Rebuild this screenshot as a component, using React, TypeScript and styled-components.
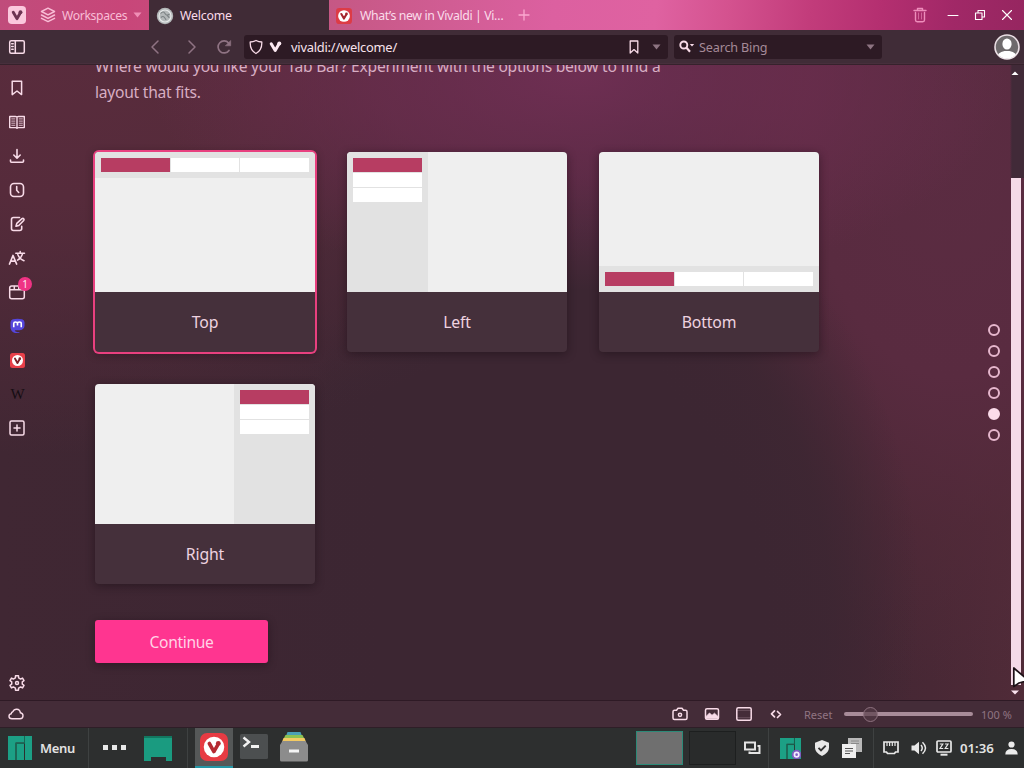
import React from "react";
import styled, { createGlobalStyle, css } from "styled-components";

const PINK = "#ff3590";
const PALE = "#f8dbe8";

const GlobalStyle = createGlobalStyle`
  *, *::before, *::after { box-sizing: border-box; }
  body { margin: 0; overflow: hidden; background: #3d2733; }
  body, button { font-family: "Noto Sans", "Open Sans", sans-serif; }
  button { border: 0; padding: 0; background: none; color: inherit; }
  svg { display: block; flex: none; }
`;

const Screen = styled.div`
  width: 1024px;
  height: 768px;
  display: flex;
  flex-direction: column;
  overflow: hidden;
  color: ${PALE};
  font-size: 13px;
`;

/* ---------- tab bar ---------- */

const TabBar = styled.header`
  height: 30px;
  flex: none;
  display: flex;
  align-items: stretch;
  background: linear-gradient(
    94deg,
    #c04c7b 0%, #c84679 12%, #c65885 33%, #d15d94 44%, #dc60a0 54%,
    #df62a1 64%, #d4528f 71%, #c23c7b 79%, #b42f70 86%, #a12867 93%, #962660 100%
  );
`;

const TabBarItem = styled.button<{ $width: number }>`
  width: ${(p) => p.$width}px;
  display: flex;
  align-items: center;
  justify-content: center;
`;

const Workspaces = styled.button`
  width: 115px;
  display: flex;
  align-items: center;
  padding-left: 6px;
  gap: 6px;
  font-size: 12.2px;
  letter-spacing: -0.35px;
  color: #f9bdd6;
`;

const Tab = styled.div<{ $active?: boolean }>`
  width: 180px;
  display: flex;
  align-items: center;
  padding: 1px 0 0 7px;
  gap: ${(p) => (p.$active ? 6 : 8)}px;
  font-size: 12.3px;
  letter-spacing: ${(p) => (p.$active ? -0.2 : -0.38)}px;
  color: #fbdcea;
  white-space: nowrap;
  ${(p) => p.$active && css`background: #402b36;`}
`;

const Spacer = styled.div`
  flex: 1;
`;

const WindowButtons = styled.div`
  display: flex;
  width: 87px;
  padding-right: 1px;
`;

/* ---------- address bar ---------- */

const AddressBar = styled.div`
  height: 35px;
  flex: none;
  display: flex;
  align-items: center;
  padding-right: 4px;
  background: #402c37;
  border-bottom: 1px solid #36222c;
  box-shadow: inset 0 -1px #472f3c;
`;

const ToolButton = styled.button<{ $width?: number; $dim?: boolean }>`
  width: ${(p) => p.$width ?? 34}px;
  height: 34px;
  display: flex;
  align-items: center;
  justify-content: center;
  color: ${(p) => (p.$dim ? "#8f7383" : PALE)};
`;

const Field = styled.div<{ $width: number; $before?: number }>`
  width: ${(p) => p.$width}px;
  height: 24px;
  margin-left: ${(p) => p.$before ?? 0}px;
  display: flex;
  align-items: center;
  background: #2d1a24;
  border-radius: 3px;
  padding: 0 7px 0 5px;
  font-size: 12.9px;
`;

const FieldIcon = styled.span<{ $after: number }>`
  margin-right: ${(p) => p.$after}px;
`;

const Url = styled.span`
  flex: 1;
  color: #f8e2ec;
  letter-spacing: -0.23px;
`;

const SearchHint = styled.span`
  flex: 1;
  font-size: 12.6px;
  letter-spacing: -0.15px;
  color: #a58a98;
  padding-left: 4px;
`;

/* ---------- page ---------- */

const Workspace = styled.main`
  flex: 1;
  min-height: 0;
  display: flex;
  background:
    radial-gradient(ellipse 430px 215px at 580px 10px, rgba(118, 48, 88, 0.85), rgba(114, 46, 84, 0.6) 48%, transparent 100%),
    radial-gradient(ellipse 330px 430px at 590px 530px, #3c2632 50%, rgba(60, 38, 50, 0.85) 72%, transparent 100%),
    radial-gradient(ellipse 320px 560px at 950px 60px, #5b2c42, #592b40 45%, rgba(84, 42, 58, 0.6) 72%, transparent 100%),
    radial-gradient(ellipse 620px 430px at 60px -40px, #5a2c3d, #562b3b 40%, transparent 100%),
    linear-gradient(90deg, #402733 0, #3c2632 380px, #3c2632 740px, #482835 930px, #502b38 100%);
`;

const SidePanel = styled.nav`
  width: 34px;
  flex: none;
  display: flex;
  flex-direction: column;
  padding-top: 6px;
`;

const PanelButton = styled.button`
  position: relative;
  height: 34px;
  display: flex;
  align-items: center;
  justify-content: center;
  color: ${PALE};
`;

const Badge = styled.span`
  position: absolute;
  top: 2px;
  left: 18px;
  width: 14px;
  height: 14px;
  border-radius: 50%;
  background: #ef3384;
  color: #ffe6f1;
  font-size: 10px;
  line-height: 14px;
  text-align: center;
`;

const WikiGlyph = styled.span`
  font-family: "Liberation Serif", serif;
  font-size: 15px;
  color: #150d12;
  letter-spacing: -1px;
`;

const Page = styled.section`
  flex: 1;
  overflow: hidden;
  padding-left: 61px;
`;

const Intro = styled.p`
  width: 600px;
  margin: -12px 0 47px;
  font-size: 15.6px;
  letter-spacing: -0.245px;
  line-height: 26px;
  color: #d7aec3;
`;

const CardGrid = styled.div`
  display: grid;
  grid-template-columns: repeat(3, 220px);
  gap: 32px;
`;

const Card = styled.div<{ $selected?: boolean }>`
  height: 200px;
  display: flex;
  flex-direction: column;
  border-radius: 4px;
  background: #45303b;
  box-shadow: ${(p) => (p.$selected ? "0 0 0 2px #e8407f, " : "")}0 2px 10px rgba(20, 8, 15, 0.45);
`;

const CardLabel = styled.div`
  flex: 1;
  display: flex;
  align-items: center;
  justify-content: center;
  font-size: 15.8px;
  letter-spacing: -0.15px;
  color: #efd3e0;
`;

type Side = "top" | "left" | "bottom" | "right";

const Preview = styled.div<{ $side: Side }>`
  height: 140px;
  display: flex;
  flex-direction: ${(p) => (p.$side === "top" || p.$side === "bottom" ? "column" : "row")};
  justify-content: ${(p) => (p.$side === "top" || p.$side === "left" ? "flex-start" : "flex-end")};
  background: #efefef;
  border-radius: 4px 4px 0 0;
  overflow: hidden;
`;

const PreviewTabs = styled.div<{ $vertical: boolean }>`
  display: flex;
  flex-direction: ${(p) => (p.$vertical ? "column" : "row")};
  gap: 1px;
  padding: 6px;
  background: #e2e2e2;
  ${(p) => (p.$vertical ? css`width: 81px;` : css`height: 26px;`)}
`;

const PreviewTab = styled.div<{ $current?: boolean }>`
  width: 69px;
  height: 14px;
  background: ${(p) => (p.$current ? "#b73d62" : "#fff")};
`;

const Continue = styled.button`
  display: block;
  width: 173px;
  height: 43px;
  margin-top: 36px;
  border-radius: 3px;
  background: ${PINK};
  color: #ffd3e6;
  font-size: 15.6px;
  letter-spacing: -0.35px;
  box-shadow: 0 2px 8px rgba(20, 8, 15, 0.4);
`;

const Steps = styled.div`
  width: 28px;
  display: flex;
  flex-direction: column;
  align-items: center;
  gap: 9px;
  padding-top: 259px;
`;

const Step = styled.span<{ $current?: boolean }>`
  width: 12px;
  height: 12px;
  border-radius: 50%;
  border: 2px solid #e6b7cd;
  ${(p) => p.$current && css`background: #fbdbe9; border-color: #fbdbe9;`}
`;

const ScrollBar = styled.div`
  position: relative;
  width: 16px;
  display: flex;
  flex-direction: column;
  align-items: center;
  padding: 6px 2px 5px 0;
  background: linear-gradient(90deg, transparent 2px, #412a38 4px) no-repeat 0 0 / 16px 113px;
`;

const Thumb = styled.div`
  flex: 1;
  width: 10px;
  margin: 102px -1px 5px 1px;
  background: #f5dae8;
`;

const Pointer = styled.svg`
  position: absolute;
  left: 4px;
  top: 601px;
`;

/* ---------- status bar ---------- */

const StatusBar = styled.footer`
  height: 28px;
  flex: none;
  display: flex;
  align-items: center;
  background: #442c38;
  border-top: 1px solid #2e1a25;
  border-bottom: 1px solid #2e1e27;
`;

const StatusButton = styled.button`
  width: 32px;
  display: flex;
  justify-content: center;
  color: ${PALE};
`;

const StatusText = styled.span<{ $width: number; $indent?: number }>`
  width: ${(p) => p.$width}px;
  padding-left: ${(p) => p.$indent ?? 0}px;
  font-size: 11px;
  color: #907482;
  white-space: nowrap;
`;

const Slider = styled.div`
  width: 129px;
  height: 4px;
  border-radius: 2px;
  background: #a88c99;
  margin-right: 8px;
  padding-left: 19px;
  display: flex;
  align-items: center;
`;

const SliderKnob = styled.span`
  flex: none;
  width: 15px;
  height: 15px;
  border-radius: 50%;
  border: 1px solid #8e727f;
  background: rgba(85, 58, 71, 0.65);
`;

/* ---------- taskbar ---------- */

const TaskBar = styled.footer`
  height: 40px;
  flex: none;
  display: flex;
  align-items: center;
  background: #2d2f2f;
  color: #e2e2e2;
`;

const TaskItem = styled.div<{ $width: number; $active?: boolean }>`
  width: ${(p) => p.$width}px;
  height: 40px;
  display: flex;
  align-items: center;
  justify-content: center;
  ${(p) => p.$active && css`background: #555858; border-bottom: 2px solid #2496a5;`}
`;

const MenuItem = styled.div`
  width: 88px;
  display: flex;
  align-items: center;
  gap: 8px;
  padding-left: 8px;
  font-size: 13px;
  letter-spacing: -0.3px;
  font-weight: 600;
`;

const Divider = styled.div`
  width: 1px;
  height: 40px;
  background: #3e4141;
`;

const Desk = styled.div<{ $active?: boolean }>`
  width: 47px;
  height: 34px;
  margin-right: ${(p) => (p.$active ? 6 : 0)}px;
  background: ${(p) => (p.$active ? "#6f6f6f" : "#292b2b")};
  border: 1px solid ${(p) => (p.$active ? "#2c8a78" : "#1d1f1f")};
`;

const Clock = styled.span`
  width: 41px;
  padding-left: 3px;
  font-size: 13.2px;
  font-weight: 600;
  white-space: nowrap;
`;

/* ---------- icons ---------- */

type GlyphProps = { w?: number; h?: number; sw?: number; children: React.ReactNode };

const Glyph = ({ w = 18, h = 18, sw = 1.5, children }: GlyphProps) => (
  <svg width={w} height={h} viewBox={`0 0 ${w} ${h}`} fill="none" stroke="currentColor" strokeWidth={sw} strokeLinecap="round" strokeLinejoin="round">
    {children}
  </svg>
);

const Caret = ({ color }: { color: string }) => (
  <svg width="9" height="6" viewBox="0 0 9 6"><path d="M.5.5h8L4.500 5.500z" fill={color} /></svg>
);

const VivaldiMark = ({ size, fill, ring, v, radius }: { size: number; fill: string; ring?: string; v: string; radius: number }) => (
  <svg width={size} height={size} viewBox="0 0 24 24">
    <rect width="24" height="24" rx={radius} fill={fill} />
    {ring && <circle cx="12" cy="12" r="8.800" fill={ring} />}
    <g transform={ring ? undefined : "translate(-3 -3) scale(1.25)"}>
      <path d="M8 9L11.900 15.900L15 10.600" fill="none" stroke={v} strokeWidth="3.100" strokeLinecap="round" strokeLinejoin="round" />
      <circle cx="15.700" cy="9" r="2.100" fill={v} />
    </g>
  </svg>
);

const PanelIcons: { name: string; icon: React.ReactNode }[] = [
  { name: "Bookmarks", icon: <Glyph><path d="M4.200 2.300h9.400v13.300L9 12l-4.800 3.600z" /></Glyph> },
  {
    name: "Reading list",
    icon: (
      <Glyph sw={1.4}>
        <path d="M1.700 3.500h5.800q1.500 0 1.500.8q0-.8 1.500-.8h5.800v11.100H10.500q-1.500 0-1.500.8q0-.8-1.500-.8H1.700zM9 4.200v10.800" />
        <path d="M3.700 5.900h3.200M3.700 8.100h3.200M3.700 10.200h3.200M3.700 12.300h3.200M11.200 5.900h3.200M11.200 8.100h3.200M11.200 10.200h3.200M11.200 12.300h3.200" strokeWidth="1" opacity=".8" />
      </Glyph>
    ),
  },
  { name: "Downloads", icon: <Glyph sw={1.6}><path d="M9 2.500v8.500M5.800 8L9 11.200L12.200 8M2.500 13v1.200q0 1 1 1h11q1 0 1-1V13" /></Glyph> },
  { name: "History", icon: <Glyph sw={1.6}><rect x="2.500" y="2.500" width="13" height="13" rx="3.500" /><path d="M8.700 5.500V9.300l2 2.200" /></Glyph> },
  {
    name: "Notes",
    icon: (
      <Glyph sw={1.6}>
        <path d="M11.500 2.500H5.500q-2 0-2 2v9q0 2 2 2h6.200q2 0 2-2v-2.300" />
        <path d="M8 11.300l.8-2.900L14 3.700q1-.6 1.700.1q.7.800 0 1.700L10.800 10.500z" />
      </Glyph>
    ),
  },
  {
    name: "Translate",
    icon: (
      <Glyph sw={1.700}>
        <path d="M1.500 15L5 6.500l3.600 8.500M2.800 12.200h4.500" />
        <path d="M7.800 4.200h8.700M12.200 2.500v1.600M14.500 4.500q-1 4.700-5 6.700M9.800 5.500q1.500 4.300 6.200 6.300" strokeWidth="1.500" />
      </Glyph>
    ),
  },
  {
    name: "Windows",
    icon: (
      <>
        <Glyph><rect x="1.700" y="3" width="14.600" height="12.700" rx="2" /><path d="M2 6.800h14M6.300 3.500v3M10.800 3.500v3" /></Glyph>
        <Badge>1</Badge>
      </>
    ),
  },
  {
    name: "Mastodon",
    icon: (
      <svg width="15" height="16" viewBox="0 0 16 16">
        <path d="M3 .7Q8 0 13 .7Q15.500 1.500 15.500 4v4q0 3-2.800 4Q10 12.800 5.200 12.500q0 1.800 2.400 2q1.200.1 2.400-.1v.9q-3.800.8-6.600-.7Q.5 13 .5 8.500V4Q.5 1.500 3 .7z" fill="#5546dc" />
        <path d="M4 9.300V5.200Q4 3.700 5.800 3.700T8 5.200v2.300V5.200Q8 3.700 10 3.700T12 5.200v4.100" fill="none" stroke="#fff" strokeWidth="1.700" />
      </svg>
    ),
  },
  { name: "Vivaldi Community", icon: <VivaldiMark size={15} fill="#e8404a" ring="#fff" v="#7c2028" radius={4} /> },
  { name: "Wikipedia", icon: <WikiGlyph>W</WikiGlyph> },
  { name: "Add panel", icon: <Glyph><rect x="2" y="2" width="14" height="14" rx="1.500" /><path d="M9 6v6M6 9h6" /></Glyph> },
];

const gearPath = (() => {
  const points: string[] = [];
  for (let i = 0; i < 6; i++) {
    const base = (i * 60 - 90) * (Math.PI / 180);
    [[-0.3, 5.4], [-0.2, 7.4], [0.2, 7.4], [0.3, 5.4]].forEach(([a, r]) =>
      points.push(`${(9 + r * Math.cos(base + a)).toFixed(2)} ${(9 + r * Math.sin(base + a)).toFixed(2)}`)
    );
  }
  return `M${points.join("L")}Z`;
})();

const ManjaroMark = ({ size, cog }: { size: number; cog?: boolean }) => (
  <svg width={size} height={size} viewBox="0 0 24 24">
    <path d="M0 0h16v6.500H7.500V24H0zM8.500 8h7.500v16H8.500zM17 0h7v24h-7z" fill="#1ca085" />
    <path d="M8 24V7.500H16.500V0" fill="none" stroke="#176854" strokeWidth="1" />
    {cog && (
      <>
        <circle cx="19" cy="19" r="5.500" fill="#7d5cc0" />
        <circle cx="19" cy="19" r="2.500" fill="none" stroke="#f2ecff" strokeWidth="2" />
      </>
    )}
  </svg>
);

/* ---------- parts ---------- */

const layouts: { side: Side; label: string }[] = [
  { side: "top", label: "Top" },
  { side: "left", label: "Left" },
  { side: "bottom", label: "Bottom" },
  { side: "right", label: "Right" },
];

const LayoutCard = ({ side, label }: { side: Side; label: string }) => (
  <Card $selected={side === "top"}>
    <Preview $side={side}>
      <PreviewTabs $vertical={side === "left" || side === "right"}>
        <PreviewTab $current />
        <PreviewTab />
        <PreviewTab />
      </PreviewTabs>
    </Preview>
    <CardLabel>{label}</CardLabel>
  </Card>
);

const BrowserTabs = () => (
  <TabBar>
    <TabBarItem $width={34}><VivaldiMark size={18} fill="#fbc8dd" v="#6d3452" radius={5} /></TabBarItem>
    <Workspaces>
      <Glyph w={16} h={18} sw={1.5}>
        <path d="M8 2.200l6.500 3.300L8 8.800L1.500 5.500zM1.500 9L8 12.300L14.500 9M1.500 12.300L8 15.600l6.500-3.300" />
      </Glyph>
      <span>Workspaces</span>
      <Caret color="#f08fb6" />
    </Workspaces>
    <Tab $active>
      <svg width="18" height="18" viewBox="0 0 18 18">
        <circle cx="9" cy="9" r="8.200" fill="#b4b8b9" />
        <circle cx="9" cy="9" r="6" fill="none" stroke="#e6e9e9" strokeWidth="1.200" />
        <path d="M4.500 6.500q3-3 4.500 0t4.500.5M5 10.500q2-2 3.500 0t1.500 2.500M11 9q2 0 2 2" fill="none" stroke="#7c8284" strokeWidth="1.100" />
      </svg>
      <span>Welcome</span>
    </Tab>
    <Tab>
      <VivaldiMark size={16} fill="#dd3b46" ring="#fff" v="#a4242d" radius={5} />
      <span>What’s new in Vivaldi | Vi…</span>
    </Tab>
    <TabBarItem $width={30}>
      <Glyph w={12} h={12} sw={1.3}><path d="M6 1v10M1 6h10" stroke="#fba8cf" /></Glyph>
    </TabBarItem>
    <Spacer />
    <TabBarItem $width={34}>
      <Glyph w={14} h={16} sw={1.4}>
        <g stroke="#ee8dbb">
          <path d="M1 3.500h12M4.500 3.300V1.500h5v1.800M2.500 5.500v7.500q0 1.700 1.700 1.700h5.600q1.700 0 1.700-1.700V5.500" />
          <path d="M5.500 6v6M8.500 6v6" strokeWidth="1" opacity=".6" />
        </g>
      </Glyph>
    </TabBarItem>
    <WindowButtons>
      <TabBarItem $width={32}><Glyph w={12} h={12} sw={1}><path d="M1 6.500h10" stroke="#fff" /></Glyph></TabBarItem>
      <TabBarItem $width={22}>
        <Glyph w={12} h={12} sw={1.1}><path d="M1.500 4h6.500v6.500H1.500zM4 3.800V1.500h6.500V8H8.200" stroke="#fff" /></Glyph>
      </TabBarItem>
      <TabBarItem $width={32}><Glyph w={12} h={12} sw={1.1}><path d="M1.500 1.500l9 9M10.500 1.500l-9 9" stroke="#fff" /></Glyph></TabBarItem>
    </WindowButtons>
  </TabBar>
);

const Toolbar = () => (
  <AddressBar>
    <ToolButton>
      <Glyph><rect x="1.700" y="2.700" width="14.600" height="12.600" rx="1.500" /><path d="M7.300 2.700v12.600M3.700 5.700h1.500M3.700 8.400h1.500M3.700 11.200h1.500" /></Glyph>
    </ToolButton>
    <ToolButton as="div" $width={105} />
    <ToolButton $dim><Glyph sw={1.5}><path d="M11 3L5 9l6 6" /></Glyph></ToolButton>
    <ToolButton $dim $width={35}><Glyph sw={1.5}><path d="M7 3l6 6l-6 6" /></Glyph></ToolButton>
    <ToolButton $dim $width={31}>
      <Glyph sw={1.7}><path d="M14 12.400A6 6 0 1 1 13.600 5" /><path d="M15.700 2.800v5h-5z" fill="currentColor" strokeWidth="0.600" /></Glyph>
    </ToolButton>
    <Field $width={424} $before={5}>
      <FieldIcon $after={6}>
        <Glyph w={14} h={16} sw={1.3}><path d="M7 1.500q2.800 1.500 5.800 1.500q.4 8-5.800 11.500Q.8 11 1.200 3Q4.200 3 7 1.500z" /></Glyph>
      </FieldIcon>
      <FieldIcon $after={9}>
        <svg width="13" height="12" viewBox="0 0 13 12">
          <path d="M2.200 2.700L6.200 9.500L9.800 3.300" fill="none" stroke="#fdeaf3" strokeWidth="3" strokeLinecap="round" strokeLinejoin="round" />
          <circle cx="10.300" cy="2.600" r="2" fill="#fdeaf3" />
        </svg>
      </FieldIcon>
      <Url>vivaldi://welcome/</Url>
      <FieldIcon $after={12}>
        <Glyph w={12} h={16} sw={1.3}><path d="M2.200 2h7.600v12L6 10.600l-3.800 3.400z" /></Glyph>
      </FieldIcon>
      <Caret color="#8e7482" />
    </Field>
    <Field $width={208} $before={6}>
      <svg width="16" height="14" viewBox="0 0 16 14">
        <circle cx="4.800" cy="5" r="3.500" fill="none" stroke={PALE} strokeWidth="1.900" />
        <path d="M7.300 7.600L11 11.800" stroke={PALE} strokeWidth="2.200" />
        <path d="M10.800 4h4.400L13 6.400z" fill={PALE} />
      </svg>
      <SearchHint>Search Bing</SearchHint>
      <Caret color="#8e7482" />
    </Field>
    <Spacer />
    <svg width="26" height="26" viewBox="0 0 26 26">
      <clipPath id="face"><circle cx="13" cy="13" r="11.500" /></clipPath>
      <circle cx="13" cy="13" r="12" fill="#6e6a6c" stroke="#eadfe4" strokeWidth="1.600" />
      <g clipPath="url(#face)" fill="#fff">
        <ellipse cx="13" cy="10" rx="4.600" ry="5.500" />
        <path d="M3 24q0-5.500 7.500-7h5q7.500 1.500 7.500 7v3H3z" />
      </g>
    </svg>
  </AddressBar>
);

const WelcomeStatus = () => (
  <StatusBar>
    <ToolButton as="div" $width={32}>
      <Glyph w={16} h={12} sw={1.4}><path d="M4 10.800Q1 10.800 1 8.300Q1 6.200 3.300 5.800Q3.200 4 4.800 3.700Q6 1 8.800 1.200Q12 1.400 12.400 4.800Q15 5.300 15 7.800Q15 10.800 12 10.800z" /></Glyph>
    </ToolButton>
    <Spacer />
    <StatusButton>
      <Glyph w={16} h={14} sw={1.5}><path d="M2.500 3.300h2L6 1.300h4l1.500 2h2q1.500 0 1.500 1.500v6.200q0 1.500-1.500 1.500h-11Q1 12.500 1 11V4.800q0-1.500 1.500-1.500z" /><circle cx="8" cy="7.800" r="1.600" /></Glyph>
    </StatusButton>
    <StatusButton>
      <Glyph w={16} h={14} sw={1.5}><rect x="1.500" y="1.700" width="13" height="10.600" rx="1.500" /><path d="M2 11.500V9.500L5.500 6L8 8.300l2.500-2.100L14 9.500v2z" fill="currentColor" strokeWidth="0.800" /></Glyph>
    </StatusButton>
    <StatusButton>
      <Glyph w={16} h={14} sw={1.5}><rect x=".8" y=".8" width="14.400" height="12.400" rx="1.500" /><path d="M1 3.400h14M1 10.700h14" strokeWidth="0.500" opacity=".4" /></Glyph>
    </StatusButton>
    <StatusButton>
      <Glyph w={12} h={12} sw={1.7}><path d="M4.500 2.800L1.500 5.800l3 3M7.500 3.500l3 3l-3 3" /></Glyph>
    </StatusButton>
    <StatusText $width={52} $indent={12}>Reset</StatusText>
    <Slider><SliderKnob /></Slider>
    <StatusText $width={43}>100 %</StatusText>
  </StatusBar>
);

const DesktopBar = () => (
  <TaskBar>
    <MenuItem><ManjaroMark size={24} /><span>Menu</span></MenuItem>
    <Divider />
    <TaskItem $width={50}>
      <svg width="23" height="7" viewBox="0 0 23 7"><path d="M0 0h5v5H0zM9 0h5v5H9zM18 0h5v5h-5z" fill="#e8e8e8" /></svg>
    </TaskItem>
    <TaskItem $width={37}>
      <svg width="28" height="26" viewBox="0 0 28 26"><path d="M0 1h28v25h-6v-4H7v4H0z" fill="#1a9b80" /><path d="M0 1h28v2H0z" fill="#127760" /></svg>
    </TaskItem>
    <TaskItem $width={11} />
    <Divider />
    <TaskItem $width={7} />
    <TaskItem $width={38} $active><VivaldiMark size={28} fill="#e73b43" ring="#fff" v="#b52a32" radius={6} /></TaskItem>
    <TaskItem $width={42}>
      <svg width="28" height="28" viewBox="0 0 28 28">
        <rect y="0" width="28" height="25" rx="1.500" fill="#4c4f50" />
        <path d="M3.500 3.500l5.500 4.500L3.500 12.500" fill="none" stroke="#f2f2f2" strokeWidth="2.400" />
        <path d="M11 11h8v3h-8z" fill="#f2f2f2" />
      </svg>
    </TaskItem>
    <TaskItem $width={38}>
      <svg width="28" height="32" viewBox="0 0 28 32">
        <path d="M7.500 0h13l1.500 4H6z" fill="#4aa0b5" />
        <path d="M5.500 3h17l1.500 3H4z" fill="#8cc152" />
        <path d="M3.500 6h21l1.500 4h-24z" fill="#f3ca63" />
        <path d="M2.500 9h23L28 13v15q0 1.500-1.500 1.500h-25Q0 29.500 0 28V13z" fill="#8c8c8c" />
        <path d="M9 17.500h10v3H9z" fill="#f4f4f4" />
      </svg>
    </TaskItem>
    <Spacer />
    <Desk $active />
    <Desk />
    <TaskItem $width={32}>
      <svg width="17" height="14" viewBox="0 0 17 14"><path d="M1 1.500h10v7H1zM13.500 5h2v7h-10v-1.500" fill="none" stroke="#e4e4e4" strokeWidth="2" /></svg>
    </TaskItem>
    <Divider />
    <TaskItem $width={42}><ManjaroMark size={21} cog /></TaskItem>
    <TaskItem $width={21}>
      <svg width="16" height="16" viewBox="0 0 16 16"><path d="M8 0l7 2.800v4.700Q15 13 8 16Q1 13 1 7.500V2.800z" fill="#e8e8e8" /><path d="M4.500 7.800l2.500 2.500l4.700-4.700" fill="none" stroke="#333" strokeWidth="1.900" /></svg>
    </TaskItem>
    <TaskItem $width={41}>
      <svg width="21" height="20" viewBox="0 0 21 20">
        <path d="M6 0h14v14H6z" fill="#b9b9b9" /><path d="M9 3h8M9 5.500h8" stroke="#8a8a8a" strokeWidth="1" />
        <path d="M0 6h14v14H0z" fill="#efefef" /><path d="M3 10.500h8M3 13h8M3 15.500h5" stroke="#555" strokeWidth="1.200" />
      </svg>
    </TaskItem>
    <Divider />
    <TaskItem $width={33}>
      <svg width="16" height="14" viewBox="0 0 16 14"><path d="M1 1h14v10h-2.500l-1 1.500h-7l-1-1.500H1z" fill="none" stroke="#e8e8e8" strokeWidth="1.700" /><path d="M4 1v4M6.600 1v4M9.300 1v4M12 1v4" stroke="#e8e8e8" strokeWidth="1.200" /></svg>
    </TaskItem>
    <TaskItem $width={24}>
      <svg width="16" height="14" viewBox="0 0 16 14"><path d="M.5 4.500h3L8 .7v12.600L3.500 9.500h-3z" fill="#e8e8e8" /><path d="M10 4q2.500 3 0 6M11.500 1.200q6 5.800 0 11.600" fill="none" stroke="#e8e8e8" strokeWidth="1.500" /></svg>
    </TaskItem>
    <TaskItem $width={26}>
      <svg width="16" height="16" viewBox="0 0 16 16"><rect x="1" y="1" width="14" height="11" rx="1" fill="none" stroke="#e8e8e8" strokeWidth="1.700" /><path d="M3.800 4h3L4 8.500h3.200M9 4h3L9.200 8.500h3.200" fill="none" stroke="#e8e8e8" strokeWidth="1.200" /><path d="M4.500 14.700h7" stroke="#e8e8e8" strokeWidth="2" /></svg>
    </TaskItem>
    <Clock>01:36</Clock>
    <TaskItem $width={26}>
      <svg width="13" height="14" viewBox="0 0 13 14"><circle cx="6.500" cy="3.500" r="3.100" fill="#ececec" /><path d="M.3 13.500q0-5.500 6.200-5.500t6.200 5.500z" fill="#ececec" /></svg>
    </TaskItem>
  </TaskBar>
);

export default function App() {
  return (
    <>
      <GlobalStyle />
      <Screen>
        <BrowserTabs />
        <Toolbar />
        <Workspace>
          <SidePanel>
            {PanelIcons.map((p) => (
              <PanelButton key={p.name} aria-label={p.name}>{p.icon}</PanelButton>
            ))}
            <Spacer />
            <PanelButton aria-label="Settings"><Glyph sw={1.5}><path d={gearPath} /><circle cx="9" cy="9" r="1.500" /></Glyph></PanelButton>
          </SidePanel>
          <Page>
            <Intro>
              Where would you like your Tab Bar? Experiment with the options below to find a layout that fits.
            </Intro>
            <CardGrid>
              {layouts.map((l) => <LayoutCard key={l.side} {...l} />)}
            </CardGrid>
            <Continue>Continue</Continue>
          </Page>
          <Steps>
            {[0, 1, 2, 3, 4, 5].map((n) => <Step key={n} $current={n === 4} />)}
          </Steps>
          <ScrollBar>
            <svg width="8" height="5" viewBox="0 0 8 5"><path d="M.5 4L4 .5L7.500 4z" fill="#fff" /></svg>
            <Thumb />
            <svg width="8" height="5" viewBox="0 0 8 5"><path d="M0 .5l4 4l4-4z" fill="#fbe3ee" /></svg>
            <Pointer width="18" height="24" viewBox="0 0 18 24">
              <path d="M1.800 2V20.500L7 17L16.500 14.500z" fill="#fff" stroke="#1c1016" strokeWidth="1.700" strokeLinejoin="round" />
            </Pointer>
          </ScrollBar>
        </Workspace>
        <WelcomeStatus />
        <DesktopBar />
      </Screen>
    </>
  );
}
